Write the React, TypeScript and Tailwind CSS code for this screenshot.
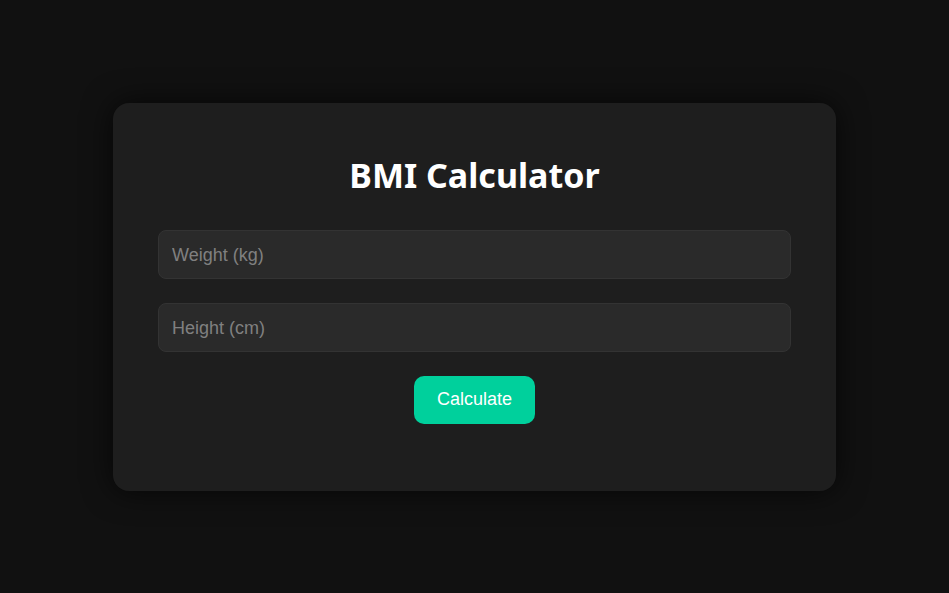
import React from 'react'

const App: React.FC = () => {
  return (
    <div className="min-h-screen w-full bg-[#111111] flex items-center justify-center">
      <div className="w-[723px] h-[388px] rounded-2xl bg-[#1e1e1e] shadow-[0_0_30px_rgba(0,0,0,0.7)] px-[45px] pt-[51px] flex flex-col items-center">
        <h1 className="text-[34px] leading-[42px] font-bold text-white font-['Noto_Sans',sans-serif] mb-[34px]">
          BMI Calculator
        </h1>
        <div className="w-full flex flex-col gap-6 font-['Liberation_Sans',Arial,sans-serif]">
          <input
            type="number"
            placeholder="Weight (kg)"
            className="w-full h-[49px] rounded-lg bg-[#2a2a2a] border border-[#333333] px-[13px] pt-[2px] text-[18px] text-white placeholder:text-[#808080] outline-none"
          />
          <input
            type="number"
            placeholder="Height (cm)"
            className="w-full h-[49px] rounded-lg bg-[#2a2a2a] border border-[#333333] px-[13px] pt-[2px] text-[18px] text-white placeholder:text-[#808080] outline-none"
          />
        </div>
        <button className="mt-6 w-[121px] h-[48px] rounded-[10px] bg-[#00d09c] text-white text-[18px] font-['Liberation_Sans',Arial,sans-serif]">
          Calculate
        </button>
      </div>
    </div>
  )
}

export default App
